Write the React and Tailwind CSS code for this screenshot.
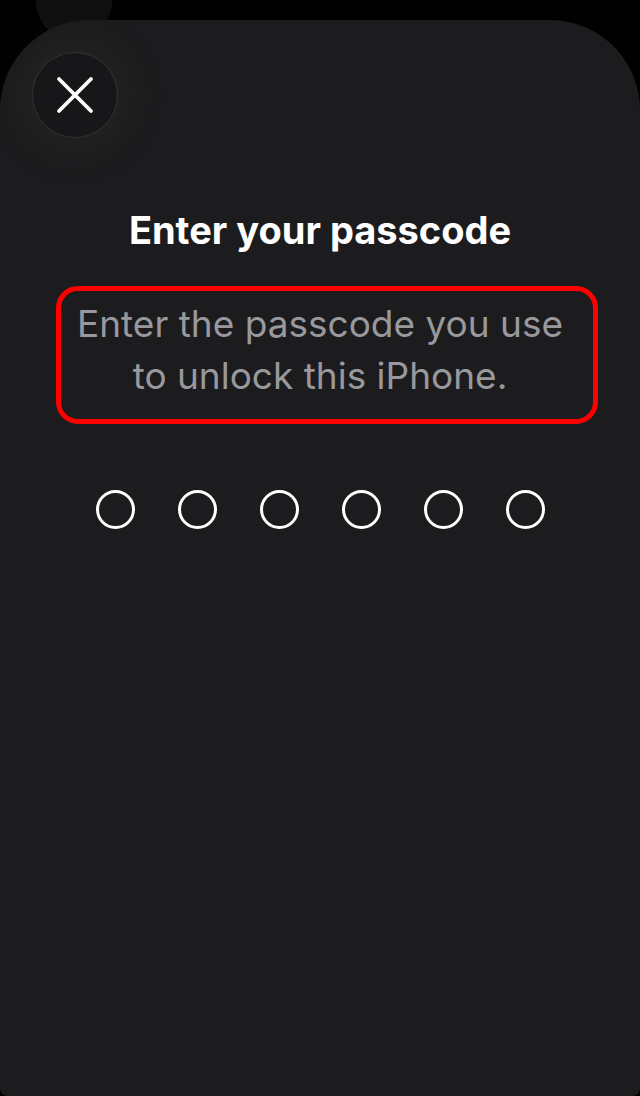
import React from 'react'

function CloseButton() {
  return (
    <button
      type="button"
      className="relative z-10 flex h-[86px] w-[86px] items-center justify-center rounded-full border border-[#323234] bg-[#171719] shadow-[0_0_30px_10px_rgba(40,40,42,0.6)]"
    >
      <svg width="38" height="38" viewBox="0 0 38 38" fill="none">
        <path d="M3 3 L35 35 M35 3 L3 35" stroke="white" strokeWidth="3.8" strokeLinecap="round" />
      </svg>
    </button>
  )
}

export default function App() {
  const dots = [0, 1, 2, 3, 4, 5]

  return (
    <div className="relative min-h-[1096px] w-full overflow-hidden bg-black" style={{ fontFamily: 'Inter, "Noto Sans", sans-serif' }}>
      {/* blurred shape behind the sheet */}
      <div className="absolute left-[36px] top-[-40px] h-[80px] w-[76px] rounded-full bg-[#101010]"></div>

      <div className="relative mt-[20px] flex min-h-[1076px] flex-col rounded-t-[90px] rounded-b-[8px] bg-[#1c1c1e] px-[32px] pt-[32px]">
        <CloseButton />

        <h1 className="mt-[70px] text-center text-[38px] font-bold leading-[44px] text-white">
          Enter your passcode
        </h1>

        <div className="ml-[24px] mr-[10px] mt-[34px] h-[138px] rounded-[22px] border-[5.5px] border-[#ff0000] pt-[7px]">
          <p className="-ml-[14px] text-center text-[37px] leading-[52px] text-[#98989d]">
            Enter the passcode you use
            <br />
            to unlock this iPhone.
          </p>
        </div>

        <div className="mt-[66px] flex justify-center gap-[43px]">
          {dots.map((d) => (
            <div key={d} className="h-[39px] w-[39px] rounded-full border-[3px] border-white"></div>
          ))}
        </div>
      </div>
    </div>
  )
}
